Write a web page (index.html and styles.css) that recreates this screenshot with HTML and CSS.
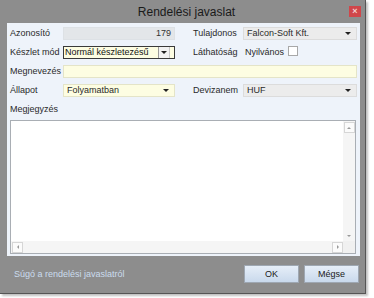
FILE: index.html
```html
<!DOCTYPE html>
<html>
<head>
<meta charset="utf-8">
<link rel="stylesheet" href="styles.css">
</head>
<body>
<div class="window">
  <div class="titlebar">
    <span class="title">Rendelési javaslat</span>
    <span class="close">×</span>
  </div>
  <div class="client">
    <div class="form">
      <span class="lbl">Azonosító</span>
      <div class="field ro num">179</div>
      <span class="lbl lbl2">Tulajdonos</span>
      <div class="field combo gray"><span class="val">Falcon-Soft Kft.</span><span class="arrow"></span></div>

      <span class="lbl">Készlet mód</span>
      <div class="field combo yellow focus"><span class="val sel">Normál készletezésű</span><span class="arrow btn"></span></div>
      <span class="lbl lbl2">Láthatóság</span>
      <div class="check"><span>Nyilvános</span><span class="box"></span></div>

      <span class="lbl">Megnevezés</span>
      <div class="field yellow wide"></div>

      <span class="lbl">Állapot</span>
      <div class="field combo yellow"><span class="val">Folyamatban</span><span class="arrow"></span></div>
      <span class="lbl lbl2">Devizanem</span>
      <div class="field combo gray"><span class="val">HUF</span><span class="arrow"></span></div>

      <span class="lbl">Megjegyzés</span>
    </div>
    <div class="memo">
      <div class="memo-main">
        <div class="memo-text"></div>
        <div class="vscroll">
          <span class="sbtn up"></span>
          <span class="sbtn down"></span>
        </div>
      </div>
      <div class="hscroll">
        <div class="htrack">
          <span class="sbtn left"></span>
          <span class="sbtn right"></span>
        </div>
        <span class="corner"></span>
      </div>
    </div>
  </div>
  <div class="footer">
    <span class="help">Súgó a rendelési javaslatról</span>
    <div class="buttons">
      <span class="button">OK</span>
      <span class="button">Mégse</span>
    </div>
  </div>
</div>
</body>
</html>
```
FILE: styles.css
```css
html, body {
  margin: 0;
  padding: 0;
  background: #ffffff;
}
body {
  width: 374px;
  height: 298px;
  font-family: "Liberation Sans", Arial, sans-serif;
  font-size: 9px;
  color: #2a2a2a;
}
.window {
  width: 366px;
  height: 294px;
  box-sizing: border-box;
  background: #8d8d8d;
  border-right: 1px solid #555;
  border-bottom: 1px solid #555;
  box-shadow: 2px 2px 2px rgba(0,0,0,0.25);
  display: flex;
  flex-direction: column;
  padding: 0 5px 0 7px;
}
.titlebar {
  height: 23px;
  display: flex;
  align-items: center;
  justify-content: center;
  position: relative;
}
.title {
  font-size: 12px;
  color: #1a1a1a;
  padding-left: 6px;
}
.close {
  position: absolute;
  right: -1px;
  top: 6px;
  width: 12px;
  height: 11px;
  background: #d0464a;
  color: #f4d0d0;
  font-size: 9px;
  line-height: 11px;
  text-align: center;
  font-weight: bold;
}
.client {
  background: #eef3fa;
  height: 233px;
  box-sizing: border-box;
  padding: 4px 0 0 3px;
  display: flex;
  flex-direction: column;
}
.form {
  display: grid;
  grid-template-columns: 53px 112px 18px 50px 114px;
  grid-auto-rows: 13px;
  row-gap: 6px;
  align-items: center;
}
.lbl {
  grid-column: 1;
  white-space: nowrap;
  line-height: 13px;
}
.lbl2 {
  grid-column: 4;
}
.field {
  box-sizing: border-box;
  height: 13px;
  border: 1px solid #c9d0d8;
  display: flex;
  align-items: center;
  line-height: 11px;
  white-space: nowrap;
  overflow: hidden;
}
.form > .combo.gray {
  grid-column: 5;
}
.ro {
  background: #e3e6e9;
  border-color: #dde1e5;
  justify-content: flex-end;
  padding-right: 3px;
  color: #333;
}
.yellow {
  background: #fdfde2;
  border-color: #e4e4c8;
}
.gray {
  background: #ececec;
  border-color: #dcdcdc;
}
.focus {
  border-color: #3a3a3a;
}
.wide {
  grid-column: 2 / 6;
}
.combo {
  justify-content: space-between;
}
.val {
  padding-left: 3px;
}
.val.sel {
  padding-left: 1px;
  color: #111;
}
.arrow {
  width: 10px;
  height: 11px;
  margin-right: 3px;
  display: flex;
  align-items: center;
  justify-content: center;
  flex: none;
}
.arrow::after {
  content: "";
  border-left: 3px solid transparent;
  border-right: 3px solid transparent;
  border-top: 3px solid #222;
}
.arrow.btn {
  background: #f2f2f2;
  border-left: 1px solid #9a9a9a;
  border-right: 1px solid #c8c8c8;
  margin-right: 4px;
}
.check {
  grid-column: 5;
  display: flex;
  align-items: center;
  gap: 4px;
  padding-left: 2px;
  line-height: 13px;
}
.box {
  width: 8px;
  height: 8px;
  background: #fff;
  border: 1px solid #a8a8a8;
  margin-top: -3px;
}
.memo {
  margin-top: 4px;
  width: 346px;
  height: 134px;
  box-sizing: border-box;
  border: 1px solid #a9aeb4;
  background: #ffffff;
  display: flex;
  flex-direction: column;
}
.memo-main {
  flex: 1;
  display: flex;
}
.memo-text {
  flex: 1;
}
.vscroll {
  width: 12px;
  background: #f5f5f5;
  display: flex;
  flex-direction: column;
  justify-content: space-between;
  align-items: center;
  padding-top: 1px;
}
.hscroll {
  height: 12px;
  display: flex;
}
.htrack {
  flex: 1;
  background: #f5f5f5;
  display: flex;
  justify-content: space-between;
  align-items: center;
  padding-left: 1px;
}
.corner {
  width: 12px;
  background: #f0f0f0;
}
.sbtn {
  width: 11px;
  height: 11px;
  box-sizing: border-box;
  border: 1px solid #d6d6d6;
  background: #fbfbfb;
  display: flex;
  align-items: center;
  justify-content: center;
}
.sbtn::after {
  content: "";
  width: 0;
  height: 0;
}
.up::after {
  border-left: 2px solid transparent;
  border-right: 2px solid transparent;
  border-bottom: 2px solid #999;
}
.down {
  border: none;
  background: transparent;
}
.down::after {
  border-left: 2px solid transparent;
  border-right: 2px solid transparent;
  border-top: 2px solid #999;
}
.left::after {
  border-top: 2px solid transparent;
  border-bottom: 2px solid transparent;
  border-right: 2px solid #999;
}
.right::after {
  border-top: 2px solid transparent;
  border-bottom: 2px solid transparent;
  border-left: 2px solid #999;
}
.footer {
  flex: 1;
  display: flex;
  align-items: center;
  justify-content: space-between;
  padding: 0 1px 2px 7px;
}
.help {
  color: #cbdcee;
  font-size: 9px;
}
.buttons {
  display: flex;
  gap: 5px;
}
.button {
  box-sizing: border-box;
  width: 55px;
  height: 18px;
  border: 1px solid #9ea7b2;
  background: linear-gradient(#e6eef8, #c9d9ec);
  display: flex;
  align-items: center;
  justify-content: center;
  color: #1a1a1a;
}
```
